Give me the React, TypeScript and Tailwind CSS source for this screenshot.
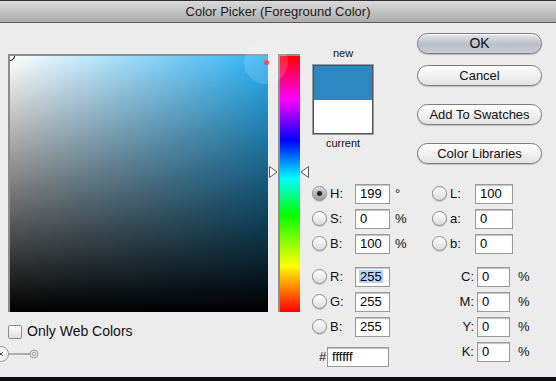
import React from "react";

const Radio = ({ checked = false }: { checked?: boolean }) => (
  <span
    className={`flex h-[15px] w-[15px] shrink-0 items-center justify-center rounded-full border border-[#8c8c8c] shadow-[inset_0_1px_1px_rgba(255,255,255,0.9),0_1px_1px_rgba(0,0,0,0.15)] ${
      checked
        ? "bg-[linear-gradient(to_bottom,#c9ccd2,#9ea3ab)]"
        : "bg-[linear-gradient(to_bottom,#ffffff,#dcdcdc)]"
    }`}
  >
    {checked && <span className="h-[5px] w-[5px] rounded-full bg-[#222]" />}
  </span>
);

const Field = ({
  value,
  w = "w-[35px]",
  selected = false,
}: {
  value: string;
  w?: string;
  selected?: boolean;
}) => (
  <div
    className={`flex h-[20px] ${w} shrink-0 items-center border border-[#9a9a9a] bg-white pl-[4px] text-[13px] leading-none text-black shadow-[inset_0_1px_1px_rgba(0,0,0,0.25)]`}
  >
    <span className={selected ? "bg-[#b5d3f7] px-[1px] -ml-[1px]" : ""}>{value}</span>
  </div>
);

const RadioRow = ({
  label,
  value,
  unit,
  checked,
  selected,
  w,
}: {
  label: string;
  value: string;
  unit?: string;
  checked?: boolean;
  selected?: boolean;
  w?: string;
}) => (
  <div className="flex h-[25px] items-center">
    <Radio checked={checked} />
    <span className="ml-[3px] w-[25px] text-[13px] text-[#111]">{label}</span>
    <Field value={value} selected={selected} w={w} />
    {unit && <span className="ml-[5px] text-[13px] text-[#111]">{unit}</span>}
  </div>
);

const CmykRow = ({ label }: { label: string }) => (
  <div className="flex h-[25px] items-center">
    <span className="w-[45px] pr-[3px] text-right text-[13px] text-[#111]">{label}</span>
    <Field value="0" w="w-[33px]" />
    <span className="ml-[8px] text-[13px] text-[#111]">%</span>
  </div>
);

const Button = ({ children, primary = false }: { children: React.ReactNode; primary?: boolean }) => (
  <div
    className={`flex h-[21px] w-[125px] items-center justify-center rounded-full border border-[#7d7d7d] text-[13px] text-[#111] shadow-[0_1px_1px_rgba(0,0,0,0.2),inset_0_1px_0_rgba(255,255,255,0.9)] ${
      primary
        ? "bg-[linear-gradient(to_bottom,#e4e7ec,#b9bfc8_55%,#c9ced6)]"
        : "bg-[linear-gradient(to_bottom,#ffffff,#f1f1f1_50%,#e2e2e2)]"
    }`}
  >
    {children}
  </div>
);

export default function App() {
  return (
    <div className="flex h-[381px] w-[556px] flex-col overflow-hidden bg-[#ececec] font-['Liberation_Sans',Arial,sans-serif]">
      <div className="flex h-[23px] shrink-0 items-center justify-center border-t border-b border-t-[#2e2e2e] border-b-[#5c5c5c] bg-[linear-gradient(to_bottom,#dadada,#acacac)] text-[13px] text-[#1c1c1c]">
        Color Picker (Foreground Color)
      </div>

      <div className="flex flex-1">
        {/* left: colour field + hue */}
        <div className="relative w-[312px] shrink-0 pl-2 pt-[31px]">
          <div className="flex">
            <div className="relative h-[258px] w-[260px] overflow-hidden border-l-2 border-t-2 border-[#8c8c8c] bg-[linear-gradient(to_top,#000_0%,rgba(0,0,0,0)_100%),linear-gradient(to_right,#ffffff,#2ab0f4)]">
              <span className="absolute -left-[5px] -top-[5px] h-[10px] w-[10px] rounded-full border border-black" />
            </div>
            <div className="relative ml-[10px] h-[258px] w-[22px] border-l-2 border-t-2 border-[#8c8c8c] bg-[linear-gradient(to_bottom,#ff0000,#ff00ff_17%,#0000ff_33%,#00ffff_48%,#00ff00_62%,#ffff00_82%,#ff0000)]">
              <svg className="absolute -left-[11px] top-[110px]" width="9" height="12" viewBox="0 0 9 12">
                <path d="M0.5 0.5 L8 6 L0.5 11.5 Z" fill="#fff" stroke="#555" />
              </svg>
              <svg className="absolute -right-[9px] top-[110px]" width="9" height="12" viewBox="0 0 9 12">
                <path d="M8.5 0.5 L1 6 L8.5 11.5 Z" fill="#fff" stroke="#555" />
              </svg>
            </div>
          </div>

          <span className="absolute left-[244px] top-[17px] h-[44px] w-[44px] rounded-full bg-white/15" />
          <span className="absolute left-[264px] top-[37px] h-[5px] w-[5px] rounded-full bg-[#e0505e]" />

          <div className="mt-[9px] flex items-center">
            <span className="h-[14px] w-[14px] rounded-[2px] border border-[#8c8c8c] bg-[linear-gradient(to_bottom,#ffffff,#dedede)]" />
            <span className="ml-[5px] text-[14px] text-[#111]">Only Web Colors</span>
          </div>
          <svg className="-ml-2 mt-[3px]" width="44" height="18" viewBox="0 0 44 18">
            <circle cx="1" cy="9" r="7.5" fill="#f4f4f4" stroke="#999" />
            <path d="M-1 7 L3 11 M3 7 L-1 11" stroke="#555" strokeWidth="1" />
            <line x1="9" y1="9" x2="30" y2="9" stroke="#999" strokeWidth="1.5" />
            <circle cx="34" cy="9" r="4" fill="#eee" stroke="#999" />
            <circle cx="34" cy="9" r="1.8" fill="none" stroke="#999" />
          </svg>
        </div>

        {/* right */}
        <div className="flex flex-1 flex-col">
          <div className="flex h-[158px]">
            <div className="ml-[1px] flex w-[60px] flex-col items-center pt-[23px]">
              <span className="text-[11px] leading-[14px] text-[#111]">new</span>
              <div className="mt-[5px] flex h-[69px] w-[60px] flex-col border border-[#555] outline outline-1 outline-[#9a9a9a]">
                <div className="flex-1 bg-[#2e87c0]" />
                <div className="flex-1 bg-white" />
              </div>
              <span className="mt-[2px] text-[11px] leading-[14px] text-[#111]">current</span>
            </div>
            <div className="ml-[44px] flex flex-col pt-[10px]">
              <Button primary>
                <span className="text-[14px]">OK</span>
              </Button>
              <div className="mt-[11px]">
                <Button>Cancel</Button>
              </div>
              <div className="mt-[18px]">
                <Button>Add To Swatches</Button>
              </div>
              <div className="mt-[18px]">
                <Button>Color Libraries</Button>
              </div>
            </div>
          </div>

          <div className="flex">
            <div className="flex w-[120px] flex-col">
              <RadioRow label="H:" value="199" unit="°" checked />
              <RadioRow label="S:" value="0" unit="%" />
              <RadioRow label="B:" value="100" unit="%" />
              <div className="mt-[8px]">
                <RadioRow label="R:" value="255" selected />
                <RadioRow label="G:" value="255" />
                <RadioRow label="B:" value="255" />
              </div>
              <div className="mt-[5px] flex h-[25px] items-center">
                <span className="ml-[7px] w-[8px] text-[13px] text-[#111]">#</span>
                <Field value="ffffff" w="w-[62px]" />
              </div>
            </div>
            <div className="flex flex-col">
              <RadioRow label="L:" value="100" w="w-[38px]" />
              <RadioRow label="a:" value="0" w="w-[38px]" />
              <RadioRow label="b:" value="0" w="w-[38px]" />
              <div className="mt-[8px]">
                <CmykRow label="C:" />
                <CmykRow label="M:" />
                <CmykRow label="Y:" />
                <CmykRow label="K:" />
              </div>
            </div>
          </div>
        </div>
      </div>

      <div className="h-[4px] shrink-0 bg-[#0d0d0f]" />
    </div>
  );
}
